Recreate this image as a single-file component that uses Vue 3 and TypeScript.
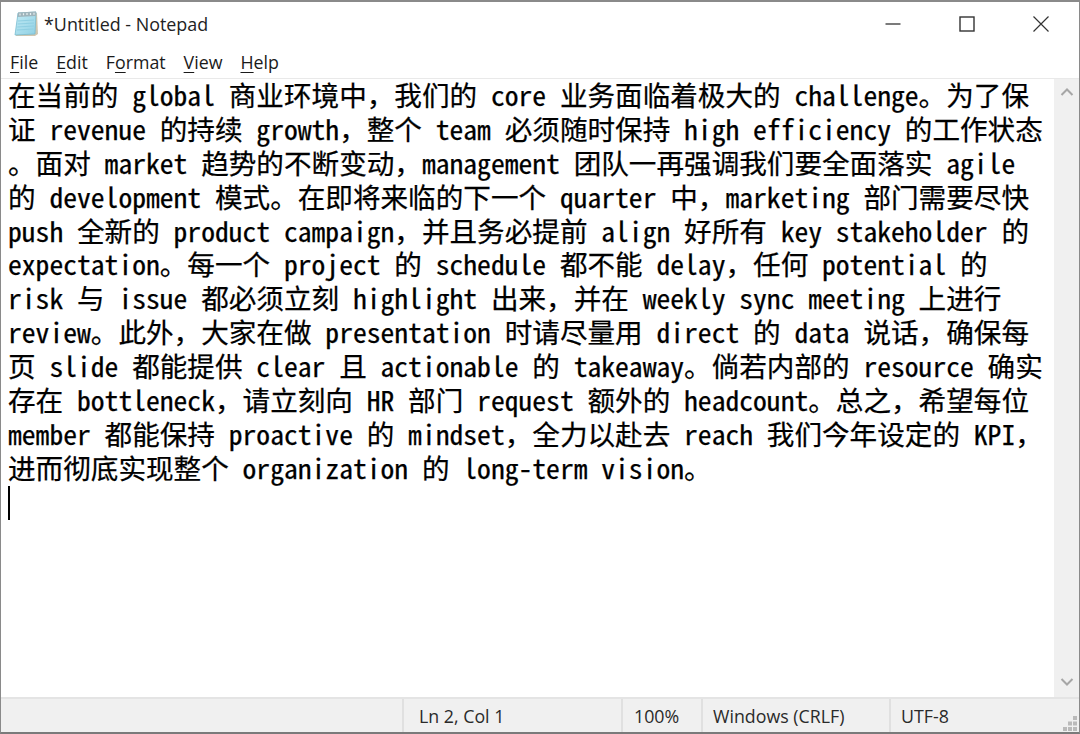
<script setup lang="ts">
const lines = [
  '在当前的 global 商业环境中，我们的 core 业务面临着极大的 challenge。为了保',
  '证 revenue 的持续 growth，整个 team 必须随时保持 high efficiency 的工作状态',
  '。面对 market 趋势的不断变动，management 团队一再强调我们要全面落实 agile',
  '的 development 模式。在即将来临的下一个 quarter 中，marketing 部门需要尽快',
  'push 全新的 product campaign，并且务必提前 align 好所有 key stakeholder 的',
  'expectation。每一个 project 的 schedule 都不能 delay，任何 potential 的',
  'risk 与 issue 都必须立刻 highlight 出来，并在 weekly sync meeting 上进行',
  'review。此外，大家在做 presentation 时请尽量用 direct 的 data 说话，确保每',
  '页 slide 都能提供 clear 且 actionable 的 takeaway。倘若内部的 resource 确实',
  '存在 bottleneck，请立刻向 HR 部门 request 额外的 headcount。总之，希望每位',
  'member 都能保持 proactive 的 mindset，全力以赴去 reach 我们今年设定的 KPI，',
  '进而彻底实现整个 organization 的 long-term vision。',
]

const menus = [
  { key: 'F', rest: 'ile' },
  { key: 'E', rest: 'dit' },
  { key: 'o', before: 'F', rest: 'rmat' },
  { key: 'V', rest: 'iew' },
  { key: 'H', rest: 'elp' },
]
</script>

<template>
  <div class="window">
    <div class="titlebar">
      <svg class="app-icon" width="26" height="28" viewBox="0 0 26 28">
        <defs>
          <linearGradient id="page" x1="0" y1="0" x2="1" y2="1">
            <stop offset="0" stop-color="#c4ecf5" />
            <stop offset="1" stop-color="#8fd0e4" />
          </linearGradient>
        </defs>
        <path d="M5 4 L24 3 L25 24 L22 26 L3 26 Z" fill="#cfc6b0" />
        <path d="M5 3 L23 2 L22 24 L2 25 Z" fill="url(#page)" stroke="#79bdd2" stroke-width="0.8" />
        <path d="M5 2.5 L23 1.5 L22.7 6 L4.6 7 Z" fill="#9fb4bb" />
        <path d="M7 3.5 V5.5 M10.5 3.3 V5.3 M14 3.1 V5.1 M17.5 2.9 V4.9 M21 2.7 V4.7" stroke="#e8eef0" stroke-width="1.2" />
        <path d="M5 11 L21 10 M4.6 14 L21 13 M4.3 17 L21 16 M4 20 L20.5 19" stroke="#8fcfe2" stroke-width="1" />
      </svg>
      <span class="title">*Untitled - Notepad</span>
      <div class="controls">
        <svg width="16" height="16" viewBox="0 0 16 16"><path d="M0.5 8 H15.5" stroke="#333" stroke-width="1.3" /></svg>
        <svg width="16" height="16" viewBox="0 0 16 16"><rect x="1" y="1" width="14" height="14" fill="none" stroke="#333" stroke-width="1.4" /></svg>
        <svg width="16" height="16" viewBox="0 0 16 16"><path d="M0.5 0.5 L15.5 15.5 M15.5 0.5 L0.5 15.5" stroke="#333" stroke-width="1.2" /></svg>
      </div>
    </div>

    <div class="menubar">
      <span v-for="m in menus" :key="m.rest" class="menu">{{ m.before }}<u>{{ m.key }}</u>{{ m.rest }}</span>
    </div>

    <div class="body">
      <div class="editor">
        <div v-for="(line, i) in lines" :key="i" class="line">{{ line }}</div>
        <div class="line"><i class="caret"></i></div>
      </div>
      <div class="scrollbar">
        <svg width="16" height="10" viewBox="0 0 16 10"><path d="M2.5 8 L8 2.5 L13.5 8" fill="none" stroke="#a6a6a6" stroke-width="2" /></svg>
        <svg width="16" height="10" viewBox="0 0 16 10"><path d="M2.5 2 L8 7.5 L13.5 2" fill="none" stroke="#a6a6a6" stroke-width="2" /></svg>
      </div>
    </div>

    <div class="statusbar">
      <div class="cell cell-grow"></div>
      <div class="cell cell-pos">Ln 2, Col 1</div>
      <div class="cell cell-zoom">100%</div>
      <div class="cell cell-eol">Windows (CRLF)</div>
      <div class="cell cell-enc">UTF-8</div>
      <svg class="grip" width="14" height="15" viewBox="0 0 14 15" fill="#bababa">
        <rect x="10" y="0" width="4" height="4" />
        <rect x="5" y="5.5" width="4" height="4" />
        <rect x="10" y="5.5" width="4" height="4" />
        <rect x="0" y="11" width="4" height="4" />
        <rect x="5" y="11" width="4" height="4" />
        <rect x="10" y="11" width="4" height="4" />
      </svg>
    </div>
  </div>
</template>

<style>
html,
body {
  margin: 0;
  background: #fff;
}
</style>

<style scoped>
.window {
  width: 1080px;
  height: 734px;
  box-sizing: border-box;
  display: flex;
  flex-direction: column;
  overflow: hidden;
  border-top: 2px solid #8a8a8a;
  border-left: 1px solid #8a8a8a;
  border-right: 1px solid #8a8a8a;
  border-bottom: 2px solid #7a7a7a;
  font-family: 'Open Sans', 'Noto Sans', sans-serif;
  color: #1a1a1a;
}

.titlebar {
  height: 44px;
  display: flex;
  align-items: center;
  padding-left: 12px;
  flex: none;
}

.app-icon {
  margin-right: 5px;
}

.title {
  font-size: 17.9px;
  color: #222;
}

.controls {
  margin-left: auto;
  display: flex;
  gap: 58px;
  padding-right: 30px;
}

.menubar {
  height: 32px;
  flex: none;
  display: flex;
  gap: 18px;
  padding-left: 9px;
  align-items: center;
  font-size: 17.8px;
  border-bottom: 1px solid #e9e9e9;
}

.menu u {
  text-underline-offset: 3px;
}

.body {
  flex: 1;
  min-height: 0;
  display: flex;
}

.editor {
  flex: 1;
  min-width: 0;
  padding: 0 0 0 7px;
  color: #000;
  font-family: 'Noto Sans Mono CJK SC', 'Noto Sans CJK SC', monospace;
  font-size: 27.6px;
  -webkit-text-stroke: 0.25px #000;
}

.line {
  height: 33.9px;
  line-height: 30px;
  white-space: pre;
}

.caret {
  display: inline-block;
  width: 2px;
  height: 34px;
  background: #000;
  vertical-align: top;
}

.scrollbar {
  width: 25px;
  flex: none;
  background: #f0f0f0;
  display: flex;
  flex-direction: column;
  justify-content: space-between;
  align-items: center;
  padding: 8px 0 10px;
  box-sizing: border-box;
}

.statusbar {
  height: 35px;
  flex: none;
  display: flex;
  align-items: stretch;
  position: relative;
  background: #f0f0f0;
  border-top: 2px solid #e4e4e4;
  box-sizing: border-box;
  font-size: 17.8px;
  color: #2a2a2a;
}

.cell {
  display: flex;
  align-items: center;
  padding-left: 15px;
  box-sizing: border-box;
  border-right: 2px solid #e0e0e0;
}

.cell-grow {
  width: 403px;
}
.cell-pos {
  width: 219px;
}
.cell-zoom {
  width: 80px;
  padding-left: 11px;
}
.cell-eol {
  width: 188px;
  padding-left: 10px;
}
.cell-enc {
  border-right: none;
  padding-left: 10px;
}

.grip {
  position: absolute;
  right: 2px;
  bottom: 1px;
}
</style>
